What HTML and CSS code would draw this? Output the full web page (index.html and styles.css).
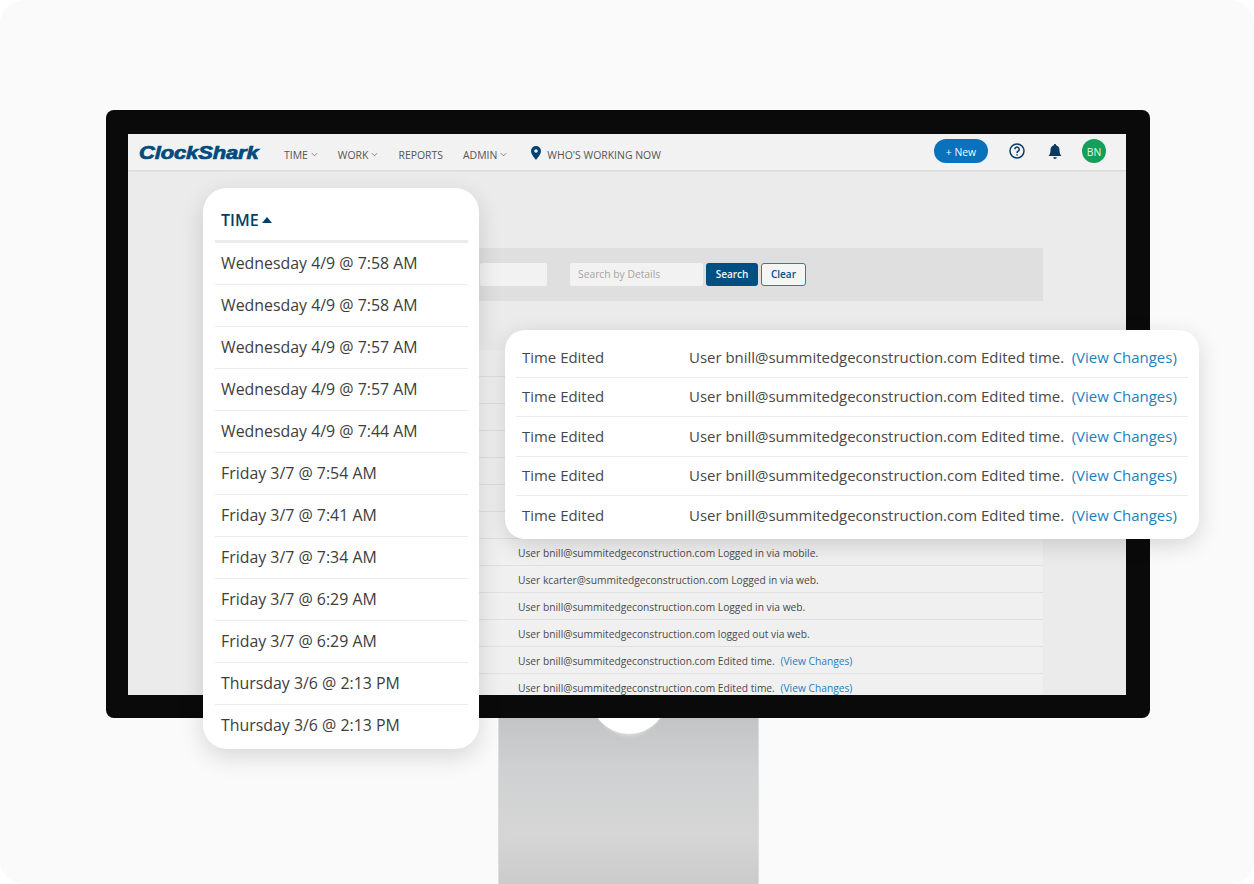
FILE: index.html
```html
<!DOCTYPE html>
<html lang="en">
<head>
<meta charset="utf-8">
<title>ClockShark audit log</title>
<link rel="stylesheet" href="styles.css">
</head>
<body>
<main class="stage">
  <div class="stand"><div class="stand-notch"></div></div>
  <div class="monitor">
    <div class="screen">
      <header class="topbar">
        <span class="logo">ClockShark</span>
        <nav class="nav">
          <span class="nav-item">TIME<svg class="chev" viewBox="0 0 8 5"><path d="M1 1l3 3 3-3"/></svg></span>
          <span class="nav-item">WORK<svg class="chev" viewBox="0 0 8 5"><path d="M1 1l3 3 3-3"/></svg></span>
          <span class="nav-item">REPORTS</span>
          <span class="nav-item">ADMIN<svg class="chev" viewBox="0 0 8 5"><path d="M1 1l3 3 3-3"/></svg></span>
          <span class="nav-item nav-who"><svg class="pin" viewBox="0 0 10 14"><path fill-rule="evenodd" d="M5 0a5 5 0 0 1 5 5c0 3.500-3.500 6.800-5 9-1.500-2.200-5-5.500-5-9a5 5 0 0 1 5-5zm0 3.200a1.800 1.800 0 1 0 0 3.600 1.800 1.800 0 0 0 0-3.600z"/></svg>WHO'S WORKING NOW</span>
        </nav>
        <div class="actions">
          <span class="new-btn">+ New</span>
          <svg class="help" viewBox="0 0 16 16"><circle cx="8" cy="8" r="7"/><path d="M5.800 6.200a2.200 2.200 0 1 1 3.400 1.900c-.8.5-1.200 1-1.200 1.900"/><path d="M8 11.300v1.200"/></svg>
          <svg class="bell" viewBox="0 0 14 16"><path d="M7 0c.7 0 1.100.5 1.100 1.200C10.400 1.800 11.500 3.700 11.500 6c0 3 .8 4.700 2 6H.5c1.200-1.300 2-3 2-6 0-2.300 1.100-4.200 3.400-4.800C5.900.5 6.300 0 7 0zM5.200 13.300h3.600a1.800 1.800 0 0 1-3.600 0z"/></svg>
          <span class="avatar">BN</span>
        </div>
      </header>
      <section class="filter">
        <span class="field field-first"></span>
        <span class="field field-details">Search by Details</span>
        <span class="btn btn-search">Search</span>
        <span class="btn btn-clear">Clear</span>
      </section>
      <section class="log">
        <div class="log-row"></div>
        <div class="log-row"></div>
        <div class="log-row"></div>
        <div class="log-row"></div>
        <div class="log-row"></div>
        <div class="log-row"></div>
        <div class="log-row"></div>
        <div class="log-row">User bnill@summitedgeconstruction.com Logged in via mobile.</div>
        <div class="log-row">User kcarter@summitedgeconstruction.com Logged in via web.</div>
        <div class="log-row">User bnill@summitedgeconstruction.com Logged in via web.</div>
        <div class="log-row">User bnill@summitedgeconstruction.com logged out via web.</div>
        <div class="log-row">User bnill@summitedgeconstruction.com Edited time. <a class="link">(View Changes)</a></div>
        <div class="log-row">User bnill@summitedgeconstruction.com Edited time. <a class="link">(View Changes)</a></div>
      </section>
    </div>
  </div>

  <aside class="card time-card">
    <div class="time-head">TIME<svg class="caret" viewBox="0 0 10 6"><path d="M5 0l5 6H0z"/></svg></div>
    <div class="time-row">Wednesday 4/9 @ 7:58 AM</div>
    <div class="time-row">Wednesday 4/9 @ 7:58 AM</div>
    <div class="time-row">Wednesday 4/9 @ 7:57 AM</div>
    <div class="time-row">Wednesday 4/9 @ 7:57 AM</div>
    <div class="time-row">Wednesday 4/9 @ 7:44 AM</div>
    <div class="time-row">Friday 3/7 @ 7:54 AM</div>
    <div class="time-row">Friday 3/7 @ 7:41 AM</div>
    <div class="time-row">Friday 3/7 @ 7:34 AM</div>
    <div class="time-row">Friday 3/7 @ 6:29 AM</div>
    <div class="time-row">Friday 3/7 @ 6:29 AM</div>
    <div class="time-row">Thursday 3/6 @ 2:13 PM</div>
    <div class="time-row">Thursday 3/6 @ 2:13 PM</div>
  </aside>

  <aside class="card edit-card">
    <div class="edit-row"><span class="edit-type">Time Edited</span><span>User bnill@summitedgeconstruction.com Edited time.</span><a class="link">(View Changes)</a></div>
    <div class="edit-row"><span class="edit-type">Time Edited</span><span>User bnill@summitedgeconstruction.com Edited time.</span><a class="link">(View Changes)</a></div>
    <div class="edit-row"><span class="edit-type">Time Edited</span><span>User bnill@summitedgeconstruction.com Edited time.</span><a class="link">(View Changes)</a></div>
    <div class="edit-row"><span class="edit-type">Time Edited</span><span>User bnill@summitedgeconstruction.com Edited time.</span><a class="link">(View Changes)</a></div>
    <div class="edit-row"><span class="edit-type">Time Edited</span><span>User bnill@summitedgeconstruction.com Edited time.</span><a class="link">(View Changes)</a></div>
  </aside>
</main>
</body>
</html>
```
FILE: styles.css
```css
* { box-sizing: border-box; }
html, body { margin: 0; padding: 0; background: #fff; }
body { font-family: "Open Sans", "Noto Sans", sans-serif; color: #3d3d3d; }
.stage { position: relative; width: 1254px; height: 884px; overflow: hidden; background: #fafafa; border-radius: 24px; }

.monitor { position: absolute; left: 106px; top: 110px; width: 1044px; height: 608px; background: #0a0a0a; border-radius: 8px; padding: 24px 24px 23px 22px; }
.screen { height: 100%; background: #ebebeb; overflow: hidden; display: flex; flex-direction: column; }
.stand { position: absolute; left: 498px; top: 718px; width: 261px; height: 166px; background: linear-gradient(#c3c4c5 0, #cfd0d1 30%, #d6d6d6 70%, #cbcbcb 100%); border-left: 1px solid #dcdcdc; border-right: 1px solid #dcdcdc; }
.stand-notch { width: 78px; height: 78px; margin: -62px auto 0; background: #fff; border-radius: 50%; box-shadow: 0 9px 4px -8px rgba(235,235,235,.85); }

.topbar { height: 36px; flex: none; background: #f2f2f2; box-shadow: 0 1px 2px rgba(0,0,0,.1); display: flex; align-items: center; padding: 0 20px 0 11px; position: relative; }
.logo { font-family: "Liberation Sans", sans-serif; font-weight: 700; font-style: italic; font-size: 18px; letter-spacing: -.1px; color: #004a7c; -webkit-text-stroke: .7px #004a7c; transform: scaleX(1.22); transform-origin: left center; width: 145px; margin-top: 3px; }
.nav { display: flex; align-items: center; gap: 20px; font-size: 10.45px; color: #555; margin-top: 5px; }
.nav-item { display: flex; align-items: center; }
.chev { width: 7px; height: 5px; margin-left: 3px; fill: none; stroke: #666; stroke-width: .9; }
.nav-who { margin-left: 4px; }
.pin { width: 10px; height: 14px; fill: #00426f; margin-right: 6px; margin-top: -3px; }
.actions { margin-left: auto; display: flex; align-items: center; margin-top: -2px; }
.new-btn { width: 54px; height: 24px; background: #0a72bd; color: #f4f8fb; border-radius: 12px; font-size: 10.4px; padding-top: 1px; display: flex; align-items: center; justify-content: center; }
.help { width: 16px; height: 16px; margin-left: 21px; fill: none; stroke: #063a63; stroke-width: 1.500; }
.bell { width: 14px; height: 16px; margin-left: 23px; fill: #063a63; margin-top: 1px; }
.avatar { width: 24px; height: 24px; margin-left: 20px; border-radius: 50%; background: #12a05a; color: #e6f5ec; font-size: 10.4px; padding-top: 1px; display: flex; align-items: center; justify-content: center; }

.filter { width: 835px; height: 53px; flex: none; margin-top: 78px; margin-left: 80px; background: #dfdfdf; display: flex; align-items: center; padding-left: 272px; }
.field { height: 23px; background: #f2f2f2; border-radius: 2px; font-size: 10.3px; color: #a5a5a5; display: flex; align-items: center; padding: 0 0 1px 8px; }
.field-first { width: 67px; margin-right: 23px; }
.field-details { width: 133px; margin-right: 3px; }
.btn { height: 23px; border-radius: 3px; font-size: 10px; font-weight: 600; padding-bottom: 1px; display: flex; align-items: center; justify-content: center; }
.btn-search { width: 52px; background: #004f82; color: #f1f6f9; margin-right: 3px; }
.btn-clear { width: 45px; background: #f5f5f5; color: #004f82; border: 1px solid #3a77a3; }

.log { margin-top: 49px; margin-left: 80px; width: 835px; display: flex; flex-direction: column; }
.log-row { height: 27px; flex: none; padding-left: 310px; font-size: 10.24px; line-height: 28px; color: #4a4a4a; background: #f0f0f0; border-bottom: 1px solid #e0e0e0; }
.link { color: #1c7fc0; }
.log-row .link { margin-left: 3px; }

.card { position: absolute; background: #fff; }
.time-card { left: 203px; top: 188px; width: 276px; height: 561px; border-radius: 24px; padding: 14px 11px 0 12px; box-shadow: 0 8px 24px rgba(0,0,0,.14); }
.time-head { height: 41px; border-bottom: 3px solid #ebebeb; padding: 0 0 3px 6px; display: flex; align-items: center; font-size: 16px; font-weight: 600; color: #063f66; }
.caret { width: 10px; height: 6px; margin-left: 3px; fill: #063f66; }
.time-row { height: 42px; padding-left: 6px; font-size: 15.9px; line-height: 41px; color: #3d3d3d; border-bottom: 1px solid #ececec; }
.time-row:last-child { border-bottom: 0; }
.edit-card { left: 505px; top: 330px; width: 694px; height: 209px; border-radius: 20px; padding: 8px 11px 0 11px; box-shadow: 0 6px 22px rgba(0,0,0,.15); }
.edit-row { height: 39.500px; display: flex; align-items: center; padding: 0 0 1px 6px; font-size: 14.96px; color: #474747; border-bottom: 1px solid #ececec; }
.edit-row:last-child { border-bottom: 0; }
.edit-type { width: 167px; flex: none; }
.edit-row .link { margin-left: 7.500px; }
```
